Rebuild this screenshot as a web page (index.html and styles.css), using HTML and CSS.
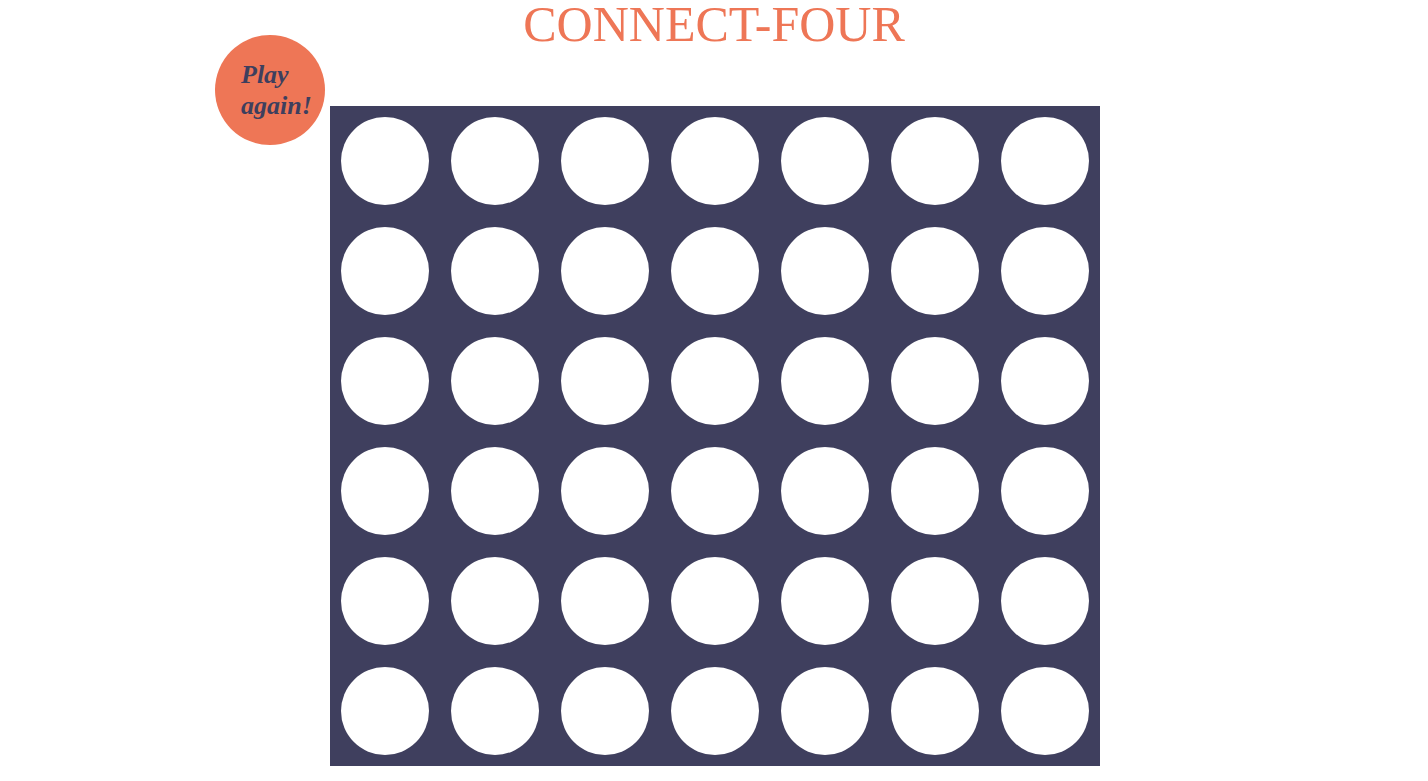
FILE: index.html
```html
<!DOCTYPE html>
<html lang="en">
<head>
<meta charset="utf-8">
<title>Connect Four</title>
<link rel="stylesheet" href="styles.css">
</head>
<body>
<div class="page">
  <h1 class="title">CONNECT-FOUR</h1>
  <button class="replay" type="button">Play again!</button>
  <div class="board">
    <div class="cell"></div><div class="cell"></div><div class="cell"></div><div class="cell"></div><div class="cell"></div><div class="cell"></div><div class="cell"></div>
    <div class="cell"></div><div class="cell"></div><div class="cell"></div><div class="cell"></div><div class="cell"></div><div class="cell"></div><div class="cell"></div>
    <div class="cell"></div><div class="cell"></div><div class="cell"></div><div class="cell"></div><div class="cell"></div><div class="cell"></div><div class="cell"></div>
    <div class="cell"></div><div class="cell"></div><div class="cell"></div><div class="cell"></div><div class="cell"></div><div class="cell"></div><div class="cell"></div>
    <div class="cell"></div><div class="cell"></div><div class="cell"></div><div class="cell"></div><div class="cell"></div><div class="cell"></div><div class="cell"></div>
    <div class="cell"></div><div class="cell"></div><div class="cell"></div><div class="cell"></div><div class="cell"></div><div class="cell"></div><div class="cell"></div>
  </div>
</div>
</body>
</html>
```
FILE: styles.css
```css
html, body {
  margin: 0;
  padding: 0;
  background: #ffffff;
}

.page {
  display: grid;
  grid-template-columns: 330px 770px 1fr;
  grid-template-rows: 49px auto;
  font-family: "Liberation Serif", "Times New Roman", serif;
}

.title {
  grid-column: 1 / -1;
  grid-row: 1;
  margin: 0;
  text-align: center;
  font-family: "Liberation Serif", "Times New Roman", serif;
  font-weight: normal;
  font-size: 50px;
  line-height: 48px;
  color: #ee7656;
}

.replay {
  grid-column: 1;
  grid-row: 1 / span 2;
  justify-self: end;
  align-self: start;
  margin: 35px 5px 0 0;
  width: 110px;
  height: 110px;
  border: none;
  border-radius: 50%;
  background: #ee7656;
  color: #3d3f5e;
  font-family: "Liberation Serif", "Times New Roman", serif;
  font-style: italic;
  font-weight: bold;
  font-size: 26px;
  line-height: 31px;
  text-align: left;
  padding: 0 0 0 26px;
  cursor: pointer;
}

.board {
  grid-column: 2;
  grid-row: 2;
  margin-top: 57px;
  width: 770px;
  height: 660px;
  background: #3f3f5e;
  display: grid;
  grid-template-columns: repeat(7, 110px);
  grid-template-rows: repeat(6, 110px);
}

.cell {
  margin: 11px;
  border-radius: 50%;
  background: #ffffff;
}
```
